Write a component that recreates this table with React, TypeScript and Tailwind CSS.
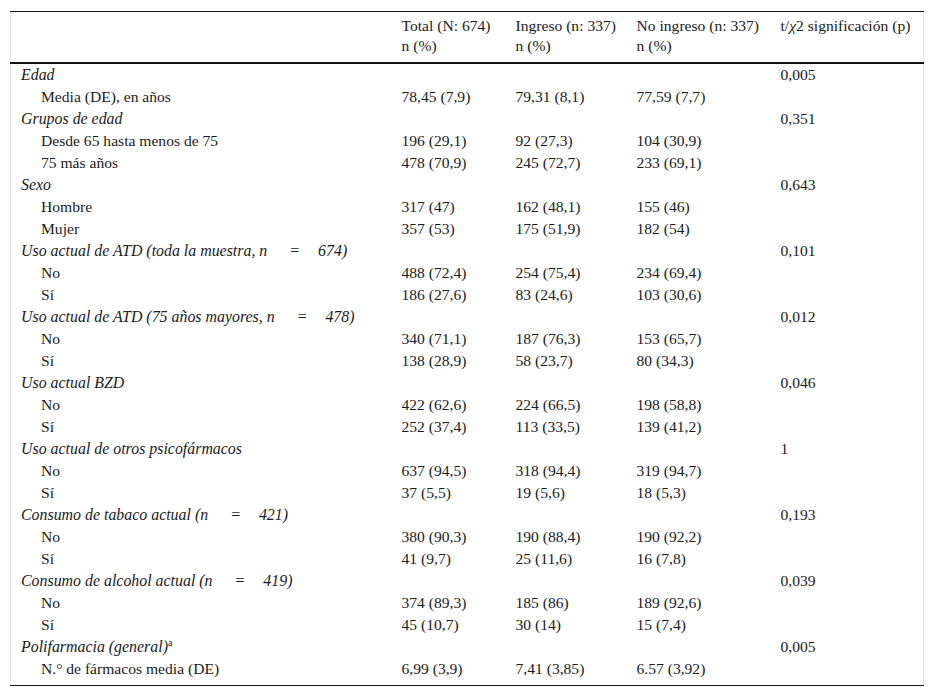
import React from "react";

type Row =
  | { kind: "group"; label: React.ReactNode; p?: string }
  | { kind: "item"; label: string; total: string; ingreso: string; noIngreso: string };

// "n = 674" style labels keep the loose spacing around the equals sign
function NEq({ value }: { value: string }) {
  return (
    <>
      n<span className="ml-[22px] mr-[18px]">=</span>
      {value}
    </>
  );
}

const rows: Row[] = [
  { kind: "group", label: "Edad", p: "0,005" },
  { kind: "item", label: "Media (DE), en años", total: "78,45 (7,9)", ingreso: "79,31 (8,1)", noIngreso: "77,59 (7,7)" },
  { kind: "group", label: "Grupos de edad", p: "0,351" },
  { kind: "item", label: "Desde 65 hasta menos de 75", total: "196 (29,1)", ingreso: "92 (27,3)", noIngreso: "104 (30,9)" },
  { kind: "item", label: "75 más años", total: "478 (70,9)", ingreso: "245 (72,7)", noIngreso: "233 (69,1)" },
  { kind: "group", label: "Sexo", p: "0,643" },
  { kind: "item", label: "Hombre", total: "317 (47)", ingreso: "162 (48,1)", noIngreso: "155 (46)" },
  { kind: "item", label: "Mujer", total: "357 (53)", ingreso: "175 (51,9)", noIngreso: "182 (54)" },
  {
    kind: "group",
    label: (
      <>
        Uso actual de ATD (toda la muestra, <NEq value="674)" />
      </>
    ),
    p: "0,101",
  },
  { kind: "item", label: "No", total: "488 (72,4)", ingreso: "254 (75,4)", noIngreso: "234 (69,4)" },
  { kind: "item", label: "Sí", total: "186 (27,6)", ingreso: "83 (24,6)", noIngreso: "103 (30,6)" },
  {
    kind: "group",
    label: (
      <>
        Uso actual de ATD (75 años mayores, <NEq value="478)" />
      </>
    ),
    p: "0,012",
  },
  { kind: "item", label: "No", total: "340 (71,1)", ingreso: "187 (76,3)", noIngreso: "153 (65,7)" },
  { kind: "item", label: "Sí", total: "138 (28,9)", ingreso: "58 (23,7)", noIngreso: "80 (34,3)" },
  { kind: "group", label: "Uso actual BZD", p: "0,046" },
  { kind: "item", label: "No", total: "422 (62,6)", ingreso: "224 (66,5)", noIngreso: "198 (58,8)" },
  { kind: "item", label: "Sí", total: "252 (37,4)", ingreso: "113 (33,5)", noIngreso: "139 (41,2)" },
  { kind: "group", label: "Uso actual de otros psicofármacos", p: "1" },
  { kind: "item", label: "No", total: "637 (94,5)", ingreso: "318 (94,4)", noIngreso: "319 (94,7)" },
  { kind: "item", label: "Sí", total: "37 (5,5)", ingreso: "19 (5,6)", noIngreso: "18 (5,3)" },
  {
    kind: "group",
    label: (
      <>
        Consumo de tabaco actual (<NEq value="421)" />
      </>
    ),
    p: "0,193",
  },
  { kind: "item", label: "No", total: "380 (90,3)", ingreso: "190 (88,4)", noIngreso: "190 (92,2)" },
  { kind: "item", label: "Sí", total: "41 (9,7)", ingreso: "25 (11,6)", noIngreso: "16 (7,8)" },
  {
    kind: "group",
    label: (
      <>
        Consumo de alcohol actual (<NEq value="419)" />
      </>
    ),
    p: "0,039",
  },
  { kind: "item", label: "No", total: "374 (89,3)", ingreso: "185 (86)", noIngreso: "189 (92,6)" },
  { kind: "item", label: "Sí", total: "45 (10,7)", ingreso: "30 (14)", noIngreso: "15 (7,4)" },
  {
    kind: "group",
    label: (
      <>
        Polifarmacia (general)
        <span className="not-italic text-[10px] leading-none relative -top-[6px]">a</span>
      </>
    ),
    p: "0,005",
  },
  { kind: "item", label: "N.° de fármacos media (DE)", total: "6,99 (3,9)", ingreso: "7,41 (3,85)", noIngreso: "6.57 (3,92)" },
];

export default function App() {
  const last = rows.length - 1;

  return (
    <div className="min-h-screen bg-white pl-[10px] pt-[11px] text-[#1b1b1b] text-[15.6px] font-[Liberation_Serif,serif]">
      <table className="w-[914px] table-fixed border-collapse border-x border-x-[#e3e3e3]">
        <colgroup>
          <col className="w-[381px]" />
          <col className="w-[114px]" />
          <col className="w-[121px]" />
          <col className="w-[144px]" />
          <col />
        </colgroup>
        <thead>
          <tr className="border-t border-t-[#111] border-b-2 border-b-[#111] align-top leading-[20px]">
            <th className="pl-[10px] pt-[4px] pb-[6px] font-normal text-left"></th>
            <th className="pl-[10px] pt-[4px] pb-[6px] font-normal text-left">
              Total (N: 674)
              <br />n (%)
            </th>
            <th className="pl-[10px] pt-[4px] pb-[6px] font-normal text-left">
              Ingreso (n: 337)
              <br />n (%)
            </th>
            <th className="pl-[10px] pt-[4px] pb-[6px] font-normal text-left">
              No ingreso (n: 337)
              <br />n (%)
            </th>
            <th className="pl-[10px] pt-[4px] pb-[6px] font-normal text-left whitespace-nowrap">
              t/<span className="italic">χ</span>2 significación (p)
            </th>
          </tr>
        </thead>
        <tbody className="border-b border-b-[#111]">
          {rows.map((r, i) => {
            const pad = i === last ? "pb-[5px]" : "";
            if (r.kind === "group") {
              return (
                <tr key={i} className="leading-[22px]">
                  <td className={`pl-[10px] italic text-[15.9px] whitespace-nowrap ${pad}`} colSpan={4}>
                    {r.label}
                  </td>
                  <td className={`pl-[10px] ${pad}`}>{r.p}</td>
                </tr>
              );
            }
            return (
              <tr key={i} className="leading-[22px]">
                <td className={`pl-[30px] whitespace-nowrap ${pad}`}>{r.label}</td>
                <td className={`pl-[10px] ${pad}`}>{r.total}</td>
                <td className={`pl-[10px] ${pad}`}>{r.ingreso}</td>
                <td className={`pl-[10px] ${pad}`}>{r.noIngreso}</td>
                <td className={pad}></td>
              </tr>
            );
          })}
        </tbody>
      </table>
    </div>
  );
}
